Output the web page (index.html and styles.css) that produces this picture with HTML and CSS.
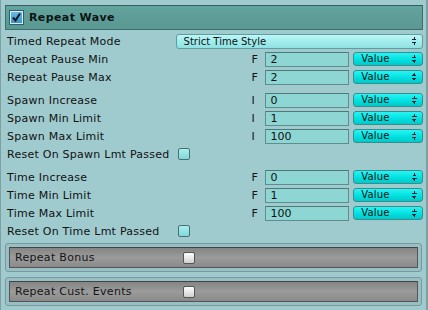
FILE: index.html
```html
<!DOCTYPE html>
<html lang="en">
<head>
    <meta charset="UTF-8">
    <title>Repeat Wave</title>
    <link rel="stylesheet" href="styles.css">
</head>
<body>
    <div class="panel">
        <div class="header">
            <span class="check on">
                <svg width="9" height="9" viewBox="0 0 9 9"><path d="M1 4.5 L3.5 7.5 L8 0.5" fill="none" stroke="#0b1a22" stroke-width="2"/></svg>
            </span>
            <span class="title">Repeat Wave</span>
        </div>

        <div class="row">
            <span class="label">Timed Repeat Mode</span>
            <div class="select wide">Strict Time Style<span class="arrows"></span></div>
        </div>
        <div class="row">
            <span class="label">Repeat Pause Min</span>
            <span class="type">F</span>
            <div class="field">2</div>
            <div class="select">Value<span class="arrows"></span></div>
        </div>
        <div class="row">
            <span class="label">Repeat Pause Max</span>
            <span class="type">F</span>
            <div class="field">2</div>
            <div class="select">Value<span class="arrows"></span></div>
        </div>

        <div class="group">
            <div class="row">
                <span class="label">Spawn Increase</span>
                <span class="type">I</span>
                <div class="field">0</div>
                <div class="select">Value<span class="arrows"></span></div>
            </div>
            <div class="row">
                <span class="label">Spawn Min Limit</span>
                <span class="type">I</span>
                <div class="field">1</div>
                <div class="select">Value<span class="arrows"></span></div>
            </div>
            <div class="row">
                <span class="label">Spawn Max Limit</span>
                <span class="type">I</span>
                <div class="field">100</div>
                <div class="select">Value<span class="arrows"></span></div>
            </div>
            <div class="row">
                <span class="label">Reset On Spawn Lmt Passed</span>
                <span class="toggle"></span>
            </div>
        </div>

        <div class="group">
            <div class="row">
                <span class="label">Time Increase</span>
                <span class="type">F</span>
                <div class="field">0</div>
                <div class="select">Value<span class="arrows"></span></div>
            </div>
            <div class="row">
                <span class="label">Time Min Limit</span>
                <span class="type">F</span>
                <div class="field">1</div>
                <div class="select">Value<span class="arrows"></span></div>
            </div>
            <div class="row">
                <span class="label">Time Max Limit</span>
                <span class="type">F</span>
                <div class="field">100</div>
                <div class="select">Value<span class="arrows"></span></div>
            </div>
            <div class="row">
                <span class="label">Reset On Time Lmt Passed</span>
                <span class="toggle"></span>
            </div>
        </div>

        <div class="section">
            <div class="section-bar">
                <span class="section-label">Repeat Bonus</span>
                <span class="box"></span>
            </div>
        </div>
        <div class="section">
            <div class="section-bar">
                <span class="section-label">Repeat Cust. Events</span>
                <span class="box"></span>
            </div>
        </div>
    </div>
</body>
</html>
```

FILE: styles.css
```css
body {
    margin: 0;
    font-family: "DejaVu Sans", Verdana, sans-serif;
    font-size: 11px;
    color: #111;
    background: #9fcbcf;
}
.panel {
    width: 428px;
    height: 310px;
    box-sizing: border-box;
    padding: 5px 3px 0 4px;
    border-left: 1px solid #7f9fa4;
    border-right: 2px solid #7f9fa4;
    background: #9fcbcf;
    overflow: hidden;
}
.header {
    height: 23px;
    margin: 0 0 2px 0;
    display: flex;
    align-items: center;
    padding-left: 4px;
    background: linear-gradient(#64a49e, #5a9892);
    border: 1px solid #3f6d6a;
    border-top-color: #35605d;
}
.check {
    width: 11px;
    height: 11px;
    border: 1px solid #d7eef3;
    background: linear-gradient(#6cb8e4, #3c8fc8);
    display: flex;
    align-items: center;
    justify-content: center;
    outline: 1px solid #2e5e6e;
}
.title {
    margin-left: 6px;
    font-weight: bold;
    font-size: 11px;
    letter-spacing: 0.4px;
    color: #0c1414;
}
.group {
    margin-top: 5px;
}
.row {
    height: 18px;
    display: flex;
    align-items: center;
}
.label {
    width: 169px;
    padding-left: 2px;
    letter-spacing: 0.25px;
    white-space: nowrap;
}
.type {
    width: 14px;
    margin-left: 76px;
}
.field {
    height: 13px;
    line-height: 13px;
    padding-left: 4px;
    width: 78px;
    background: #8dd6d3;
    border: 1px solid #5f8d8b;
    border-top-color: #4e7876;
    margin-right: 4px;
}
.select {
    position: relative;
    width: 70px;
    height: 14px;
    line-height: 12px;
    box-sizing: border-box;
    padding-left: 7px;
    border: 1px solid #3c8c8c;
    border-radius: 3px;
    background: linear-gradient(#28f4f4, #00dede 60%, #00c9c9);
    font-size: 10px;
    letter-spacing: 0.2px;
}
.select.wide {
    width: 248px;
    height: 15px;
    line-height: 13px;
    background: linear-gradient(#bff6f6, #a2eded 50%, #8fe2e2);
    border-color: #5f9e9e;
    letter-spacing: 0;
}
.arrows {
    position: absolute;
    right: 5px;
    top: 2px;
    width: 5px;
    height: 8px;
    background:
        linear-gradient(to bottom right, transparent 50%, #223 50%) 0 0 / 3px 3px no-repeat,
        linear-gradient(to bottom left, transparent 50%, #223 50%) 2px 0 / 3px 3px no-repeat,
        linear-gradient(to top right, transparent 50%, #223 50%) 0 5px / 3px 3px no-repeat,
        linear-gradient(to top left, transparent 50%, #223 50%) 2px 5px / 3px 3px no-repeat;
}
.toggle {
    width: 10px;
    height: 10px;
    margin-left: 2px;
    border: 1px solid #4d6e70;
    border-radius: 2px;
    background: linear-gradient(#a8eeee, #80d8d8);
}
.section {
    margin-top: 3px;
    padding: 3px;
    height: 21px;
    border: 1px solid #7b97a0;
    border-radius: 3px;
    background: #98bfc4;
    margin-right: 1px;
}
.section + .section {
    margin-top: 5px;
}
.section-bar {
    height: 19px;
    display: flex;
    align-items: center;
    padding-left: 5px;
    background: linear-gradient(#858585, #9b9b9b 50%, #8a8a8a);
    border: 1px solid #555;
    border-top-color: #444;
}
.section-label {
    width: 168px;
    letter-spacing: 0.3px;
    color: #151515;
}
.box {
    width: 10px;
    height: 10px;
    border: 1px solid #555;
    border-radius: 2px;
    background: linear-gradient(#fff, #d0d0d0);
}
```
